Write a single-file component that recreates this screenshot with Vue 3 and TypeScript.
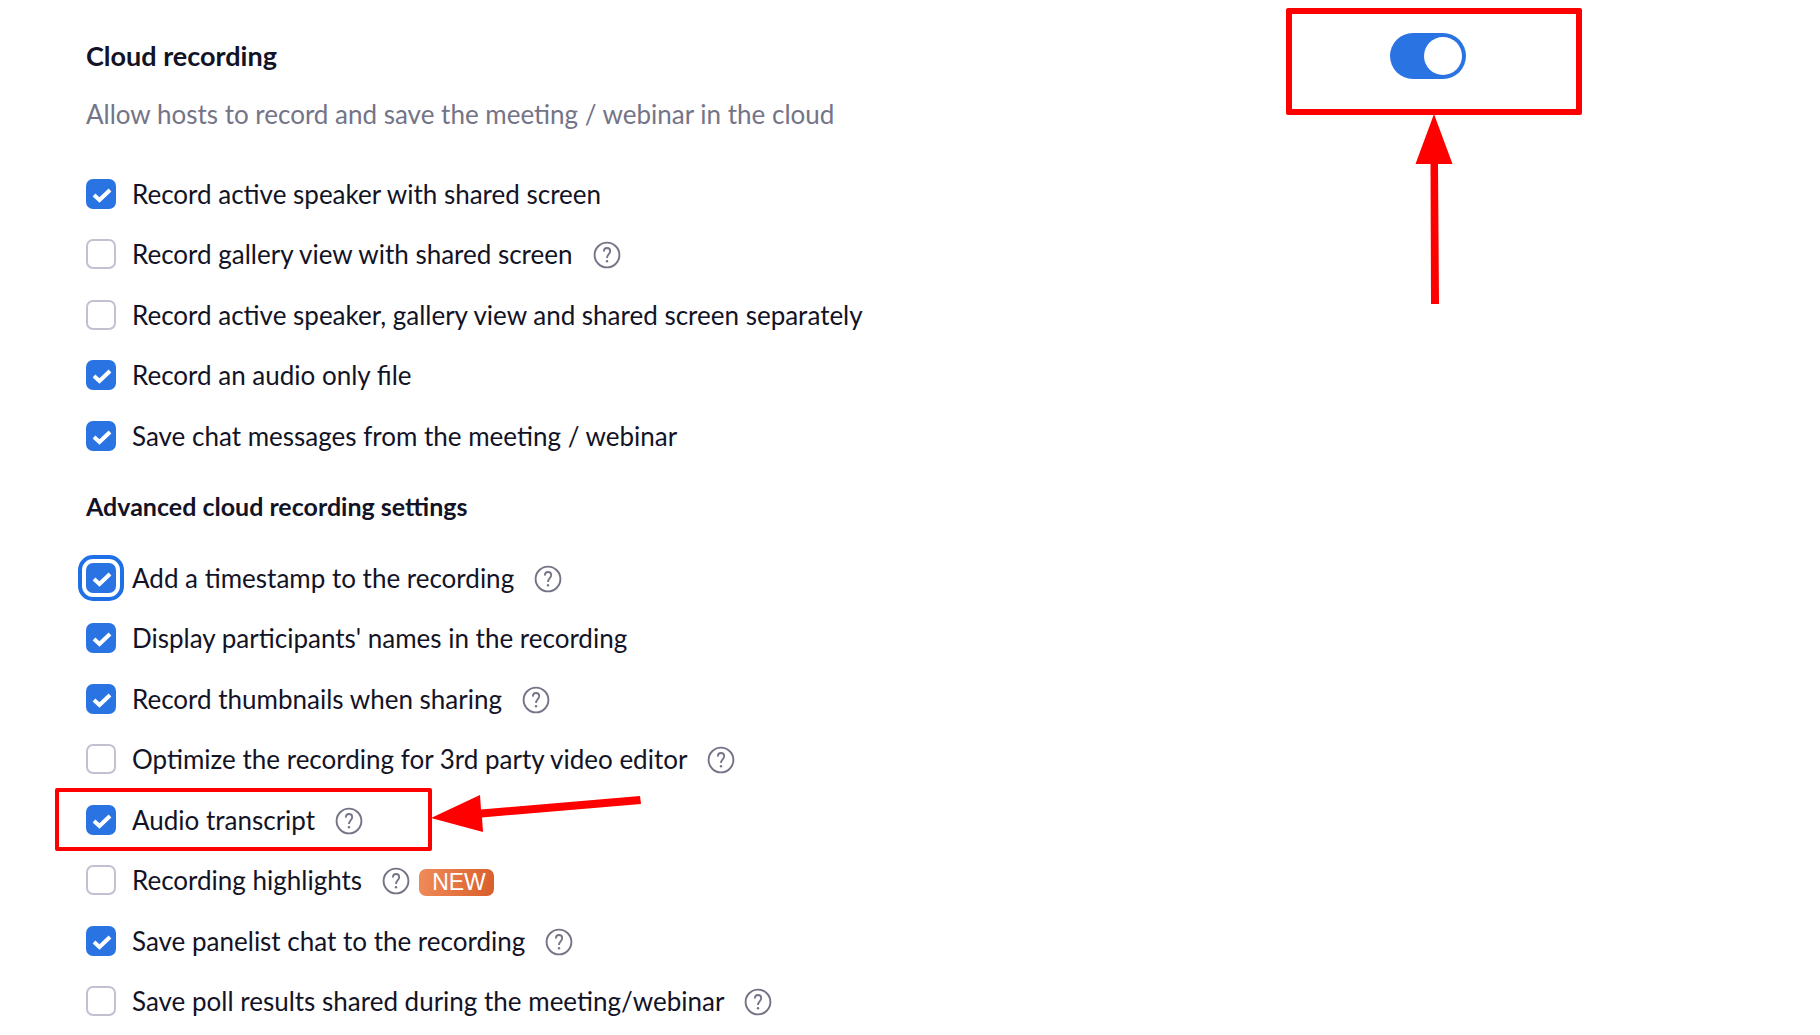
<script setup lang="ts">
import { ref } from 'vue'

interface Option {
  id: string
  label: string
  checked: boolean
  help?: boolean
  isNew?: boolean
  focused?: boolean
  marked?: boolean
}

const enabled = ref(true)

const basic = ref<Option[]>([
  { id: 'speaker', label: 'Record active speaker with shared screen', checked: true },
  { id: 'gallery', label: 'Record gallery view with shared screen', checked: false, help: true },
  { id: 'separate', label: 'Record active speaker, gallery view and shared screen separately', checked: false },
  { id: 'audio', label: 'Record an audio only file', checked: true },
  { id: 'chat', label: 'Save chat messages from the meeting / webinar', checked: true },
])

const advanced = ref<Option[]>([
  { id: 'timestamp', label: 'Add a timestamp to the recording', checked: true, help: true, focused: true },
  { id: 'names', label: "Display participants' names in the recording", checked: true },
  { id: 'thumbnails', label: 'Record thumbnails when sharing', checked: true, help: true },
  { id: 'optimize', label: 'Optimize the recording for 3rd party video editor', checked: false, help: true },
  { id: 'transcript', label: 'Audio transcript', checked: true, help: true, marked: true },
  { id: 'highlights', label: 'Recording highlights', checked: false, help: true, isNew: true },
  { id: 'panelist', label: 'Save panelist chat to the recording', checked: true, help: true },
  { id: 'poll', label: 'Save poll results shared during the meeting/webinar', checked: false, help: true },
])

const groups = [
  { title: '', options: basic },
  { title: 'Advanced cloud recording settings', options: advanced },
]
</script>

<template>
  <main class="settings">
    <header class="head">
      <div class="intro">
        <h1><label for="cloud">Cloud recording</label></h1>
        <p>Allow hosts to record and save the meeting / webinar in the cloud</p>
      </div>
      <div class="switch-wrap">
        <input id="cloud" v-model="enabled" class="switch" type="checkbox" role="switch" />
        <span class="frame frame-switch"></span>
        <svg class="arrow arrow-up" width="40" height="190" viewBox="0 0 40 190" aria-hidden="true">
          <path d="M20 0 38.500 50H24L25 190H17L16.500 50H1.500Z" />
        </svg>
      </div>
    </header>

    <section v-for="(group, i) in groups" :key="i">
      <h2 v-if="group.title">{{ group.title }}</h2>
      <ul>
        <li v-for="o in group.options.value" :key="o.id">
          <input :id="o.id" v-model="o.checked" class="box" :class="{ focused: o.focused }" type="checkbox" />
          <label :for="o.id">{{ o.label }}</label>
          <button v-if="o.help" class="help" type="button" :aria-label="'About: ' + o.label">
            <svg width="28" height="28" viewBox="0 0 28 28" fill="none" stroke="#747487">
              <circle cx="14" cy="14" r="12.400" stroke-width="1.900" />
              <path d="M10.800 10.600C10.900 8.200 12.200 7 14 7C15.900 7 17.200 8.300 17.200 10.300C17.200 13 14 13.400 14 17" stroke-width="1.800" />
              <circle cx="14" cy="20.200" r="1.200" fill="#747487" stroke="none" />
            </svg>
          </button>
          <span v-if="o.isNew" class="badge">NEW</span>
          <template v-if="o.marked">
            <span class="frame frame-row"></span>
            <svg class="arrow arrow-left" width="212" height="40" viewBox="0 0 212 40" aria-hidden="true">
              <path d="M0 24 49 1 50 15.500 209 2 210 10 51 23.500 52 38Z" />
            </svg>
          </template>
        </li>
      </ul>
    </section>
  </main>
</template>

<style>
body {
  margin: 0;
  background: #fff;
}
</style>

<style scoped>
.settings {
  padding: 33px 86px 0;
  font-family: Lato, "Liberation Sans", sans-serif;
  font-size: 26px;
  line-height: 30px;
  color: #131326;
  overflow: hidden;
}

.head {
  display: flex;
  justify-content: space-between;
  align-items: flex-start;
  margin-bottom: 27px;
}

h1,
h2 {
  margin: 0;
  font-size: 25px;
  font-weight: 700;
  line-height: 46px;
}

h1 {
  font-size: 27px;
}

h2 {
  padding: 17px 0 19px;
}

p {
  margin: 12px 0 0;
  line-height: 46px;
  color: #747487;
}

.switch-wrap {
  position: relative;
  display: flex;
  margin-right: 268px;
}

.switch {
  appearance: none;
  display: flex;
  justify-content: flex-end;
  width: 76px;
  height: 46px;
  margin: 0;
  padding: 4px;
  box-sizing: border-box;
  border-radius: 23px;
  background: #2a73e2;
  cursor: pointer;
}

.switch::before {
  content: "";
  width: 38px;
  border-radius: 50%;
  background: #fff;
}

.switch:not(:checked) {
  justify-content: flex-start;
  background: #babacc;
}

ul {
  margin: 0;
  padding: 0;
  list-style: none;
}

li {
  position: relative;
  display: flex;
  align-items: center;
  height: 60px;
}

li:nth-child(even) {
  margin-bottom: 1px;
}

.box {
  appearance: none;
  flex: none;
  width: 30px;
  height: 30px;
  margin: 0 16px 0 0;
  box-sizing: border-box;
  border: 2px solid #c1c1d2;
  border-radius: 7px;
  background: #fff;
  cursor: pointer;
}

.box:checked {
  border: 0;
  background: #2a73e2 url("data:image/svg+xml,%3Csvg xmlns='http://www.w3.org/2000/svg' viewBox='0 0 30 30'%3E%3Cpath d='M8 16 13.500 21 24 11' fill='none' stroke='white' stroke-width='4'/%3E%3C/svg%3E");
}

.box.focused {
  outline: 4px solid #1f70e6;
  outline-offset: 4px;
}

.help {
  display: flex;
  margin: 2px 0 0 20px;
  padding: 0;
  border: 0;
  background: none;
  cursor: pointer;
}

.badge {
  margin: 4px 0 0 9px;
  padding: 0 8px 0 13px;
  border-radius: 7px;
  background: linear-gradient(100deg, #f08c5a, #d95e2a);
  color: #fff;
  font-family: "Liberation Sans", Arial, sans-serif;
  font-size: 23px;
  line-height: 27px;
}

.frame,
.arrow {
  position: absolute;
  pointer-events: none;
}

.frame {
  box-sizing: border-box;
  border: 6px solid #f00;
  border-radius: 2px;
}

.frame-switch {
  top: -25px;
  left: -104px;
  width: 296px;
  height: 107px;
}

.frame-row {
  top: -2px;
  left: -31px;
  width: 377px;
  height: 63px;
  border-width: 4px;
}

.arrow {
  fill: #f00;
}

.arrow-up {
  top: 81px;
  left: 24px;
}

.arrow-left {
  top: 4px;
  left: 345px;
}
</style>
